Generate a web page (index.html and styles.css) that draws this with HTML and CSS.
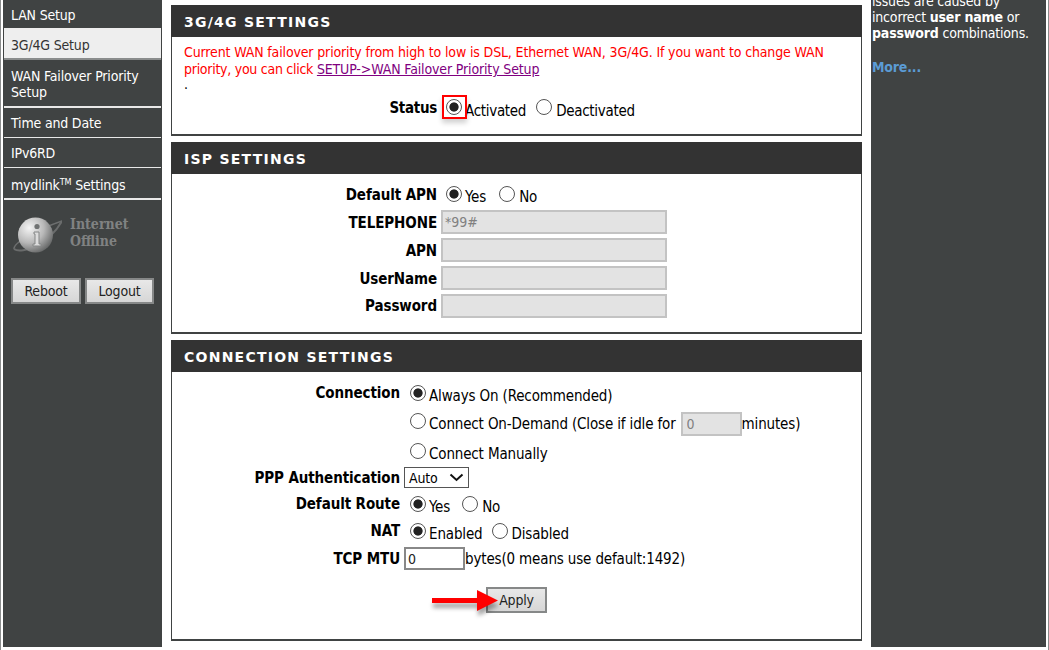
FILE: index.html
```html
<!DOCTYPE html>
<html lang="en">
<head>
<meta charset="utf-8">
<title>3G/4G Setup</title>
<link rel="stylesheet" href="styles.css">
</head>
<body>
<div class="page">
  <aside class="sidebar">
    <nav class="menu">
      <a class="item item-first">LAN Setup</a>
      <a class="item active">3G/4G Setup</a>
      <a class="item item-wan">WAN Failover Priority Setup</a>
      <a class="item">Time and Date</a>
      <a class="item">IPv6RD</a>
      <a class="item item-my">mydlink<sup>TM</sup> Settings</a>
    </nav>
    <div class="status">
      <svg class="info" width="50" height="44" viewBox="0 0 50 44">
        <defs>
          <radialGradient id="ball" cx="0.32" cy="0.3" r="0.85">
            <stop offset="0" stop-color="#f4f4f4"/>
            <stop offset="0.5" stop-color="#b8b8b8"/>
            <stop offset="1" stop-color="#505252"/>
          </radialGradient>
        </defs>
        <path d="M2 36 C1 30 24 17 50 8" fill="none" stroke="#6d6f6f" stroke-width="1.4"/>
        <path d="M2 36 C10 42 38 30 50 8" fill="none" stroke="#6a6c6c" stroke-width="2"/>
        <circle cx="23.5" cy="22" r="17.5" fill="url(#ball)"/>
        <circle cx="25" cy="13.5" r="2.6" fill="#707272"/>
        <path d="M22 19 h5 v12 h2 v2 h-8 v-2 h2 v-10 h-1z" fill="#dcdcdc" stroke="#858787" stroke-width="1"/>
      </svg>
      <div class="status-text">Internet<br>Offline</div>
    </div>
    <div class="side-buttons">
      <button class="side-btn btn-reboot" type="button">Reboot</button>
      <button class="side-btn btn-logout" type="button">Logout</button>
    </div>
  </aside>

  <main class="main">
    <section class="box box-one">
      <h2 class="box-title">3G/4G SETTINGS</h2>
      <div class="box-body">
        <p class="notice">Current WAN failover priority from high to low is DSL, Ethernet WAN, 3G/4G. If you want to change WAN <span class="notice-tail">priority, you can click </span><a class="notice-link">SETUP-&gt;WAN Failover Priority Setup</a></p>
        <p class="dot">.</p>
        <div class="status-row">
          <b class="status-label">Status</b>
          <span class="mark-wrap">
            <input class="radio" type="radio" name="st" checked>
            <span class="red-box"></span>
          </span>
          <span class="txt-low txt-first">Activated</span>
          <input class="radio radio-2" type="radio" name="st">
          <span class="txt-low">Deactivated</span>
        </div>
      </div>
    </section>

    <section class="box box-two">
      <h2 class="box-title">ISP SETTINGS</h2>
      <div class="box-body isp">
        <div class="row row-apn">
          <label class="lab">Default APN</label>
          <input class="radio first-radio" type="radio" name="apn" checked><span class="txt-low">Yes</span>
          <input class="radio radio-2" type="radio" name="apn"><span class="txt-low">No</span>
        </div>
        <div class="row row-f"><label class="lab">TELEPHONE</label><input class="field" type="text" value="*99#" disabled></div>
        <div class="row row-f"><label class="lab">APN</label><input class="field" type="text" disabled></div>
        <div class="row row-f"><label class="lab">UserName</label><input class="field" type="text" disabled></div>
        <div class="row row-f row-last"><label class="lab">Password</label><input class="field" type="text" disabled></div>
      </div>
    </section>

    <section class="box box-three">
      <h2 class="box-title">CONNECTION SETTINGS</h2>
      <div class="box-body conn">
        <div class="row r-c1"><label class="lab">Connection</label><input class="radio first-radio" type="radio" name="c" checked><span class="txt-low">Always On (Recommended)</span></div>
        <div class="row r-c2"><span class="lab"></span><input class="radio first-radio" type="radio" name="c"><span class="txt-low">Connect On-Demand (Close if idle for</span><input class="idle" type="text" value="0" disabled><span class="txt-low">minutes)</span></div>
        <div class="row r-c3"><span class="lab"></span><input class="radio first-radio" type="radio" name="c"><span class="txt-low">Connect Manually</span></div>
        <div class="row r-ppp"><label class="lab">PPP Authentication</label>
          <span class="select">Auto<svg class="chev" width="15" height="9" viewBox="0 0 15 9"><path d="M1.5 1.5 L7.5 7 L13.5 1.5" fill="none" stroke="#111" stroke-width="2"/></svg></span>
        </div>
        <div class="row r-route"><label class="lab">Default Route</label><input class="radio first-radio" type="radio" name="r" checked><span class="txt-low">Yes</span><input class="radio radio-2" type="radio" name="r"><span class="txt-low">No</span></div>
        <div class="row r-nat"><label class="lab">NAT</label><input class="radio first-radio" type="radio" name="n" checked><span class="txt-low">Enabled</span><input class="radio radio-2" type="radio" name="n"><span class="txt-low">Disabled</span></div>
        <div class="row r-mtu"><label class="lab">TCP MTU</label><input class="mtu" type="text" value="0"><span class="txt-mtu">bytes(0 means use default:1492)</span></div>
        <div class="apply-row">
          <span class="apply-wrap">
            <button class="apply" type="button">Apply</button>
            <svg class="arrow" width="72" height="30" viewBox="0 0 72 30">
              <path d="M2 11 H47 V3 L68 13.5 L47 24 V16 H2 Z" fill="#f00"/>
            </svg>
          </span>
        </div>
      </div>
    </section>
  </main>

  <aside class="help">
    <p class="help-text">issues are caused by incorrect <b>user name</b> or <b>password</b> combinations.</p>
    <p class="more">More...</p>
  </aside>
</div>
</body>
</html>
```
FILE: styles.css
```css
* { box-sizing: border-box; }
html, body { margin: 0; height: 100%; background: #fff; overflow: hidden; }
body { font-family: "DejaVu Sans Condensed", "DejaVu Sans", sans-serif; font-size: 14px; color: #000; letter-spacing: -0.18px; }
.page { display: flex; width: 1049px; height: 650px; padding: 0 0 3px 2px; border-left: 1px solid #8a8c8c; border-right: 1px solid #8a8c8c; align-items: stretch; }

.sidebar { width: 159px; background: #404343; color: #fff; border-left: 1px solid #404343; padding: 0 1px 0 0; flex: none; }
.menu { display: flex; flex-direction: column; }
.item { display: block; padding: 7px 0 0 7px; height: 30px; border-bottom: 1px solid #e8e8e8; line-height: 16px; }
.item-first { height: 28px; padding-top: 7px; border-bottom: 0; }
.active { height: 32px; background: #eeeeee; color: #333; border-bottom: 2px solid #8a8c8c; padding-top: 9px; }
.item-wan { height: 48px; padding-top: 8px; border-bottom: 2px solid #e8e8e8; }
.item-my { height: 32px; padding-top: 9px; border-bottom: 2px solid #e8e8e8; }
sup { font-size: 9px; line-height: 0; vertical-align: 5px; }
.status { display: flex; align-items: flex-start; padding: 13px 0 0 8px; height: 60px; }
.status-text { margin: 3px 0 0 8px; color: #808282; font-weight: bold; font-size: 14px; line-height: 17px; letter-spacing: 0; font-family: "DejaVu Serif Condensed", "DejaVu Serif", serif; }
.side-buttons { display: flex; gap: 4px; padding: 18px 0 0 7px; }
.side-btn { height: 26px; border: 2px solid #868888; background: linear-gradient(#e8e8e8, #d6d6d6); font: inherit; letter-spacing: inherit; color: #222; padding: 0; }
.btn-reboot { width: 70px; }
.btn-logout { width: 69px; }

.main { width: 691px; margin-left: 9px; flex: none; display: flex; flex-direction: column; gap: 6px; padding-top: 5px; }
.box { border: 1px solid #404343; border-top: 0; border-bottom-width: 2px; background: #fff; flex: none; }
.box-title { margin: 0; height: 32px; margin-inline: -1px; background: #333333; color: #fff; font-family: "DejaVu Sans", sans-serif; font-size: 14px; font-weight: bold; letter-spacing: 1.25px; line-height: 34px; padding-left: 13px; }
.box-one { height: 131px; }
.box-two { height: 192px; }
.box-three { height: 301px; }

.notice { margin: 0; padding: 7px 12px 0; color: #f00; line-height: 17px; letter-spacing: -0.14px; }
.notice-tail { letter-spacing: -0.27px; }
.notice-link { color: #800080; text-decoration: underline; }
.dot { margin: -2px 0 0; padding-left: 12px; line-height: 16px; height: 16px; }
.status-row { display: flex; align-items: center; padding-left: 216px; height: 30px; font-size: 15px; letter-spacing: -0.3px; }
.status-label { width: 49px; margin: 2px 9px 0 0; text-align: right; white-space: nowrap; }
.mark-wrap { position: relative; display: flex; width: 16px; height: 16px; }
.red-box { position: absolute; left: -4px; top: -4px; width: 25px; height: 24px; border: 2px solid #f00; box-shadow: 0 4px 5px rgba(0,0,0,.18); }
.txt-low { margin-top: 6px; line-height: 16px; white-space: nowrap; }
.status-row .txt-low { margin-top: 7px; }
.txt-first { margin-left: 3px; }

.radio { appearance: none; width: 16px; height: 16px; margin: 0; border: 1px solid #555; border-radius: 50%; background: #fff; flex: none; }
.radio:checked { background: radial-gradient(circle, #222 0 4.2px, #fff 5px); }
.radio-2 { margin: 0 4px 0 10px; }
.first-radio { margin: 0 3px 0 9px; }
.conn .first-radio { margin-left: 10px; }
.row-apn .radio-2 { margin-left: 13px; }
.r-route .radio-2 { margin-left: 12px; }
.r-nat .radio-2 { margin-left: 9px; }
.mark-wrap .radio { margin: 0; }

.row { display: flex; align-items: center; font-size: 15px; letter-spacing: -0.15px; }
.lab { display: block; flex: none; text-align: right; font-weight: bold; letter-spacing: -0.1px; white-space: nowrap; }
.isp .lab { width: 265px; margin-top: 2px; }
.isp .row-last .lab { margin-top: 0; }
.conn .lab { width: 228px; }
.row-apn { height: 34px; padding-top: 6px; }
.row-f { height: 28px; }
.row-last { height: 27px; }
.isp .row-f .lab { margin-right: 4px; }
.field { width: 226px; height: 24px; border: 2px solid #c3c3c3; background: #e3e3e3; color: #808080; font: 14px "DejaVu Sans Condensed", "DejaVu Sans", sans-serif; padding: 0 2px; }

.conn { padding-top: 7px; }
.r-c1 { height: 28px; }
.r-c2 { height: 28px; }
.r-c3 { height: 32px; }
.r-ppp { height: 21px; }
.r-route { height: 32px; }
.r-nat { height: 22px; }
.r-mtu { height: 23px; margin-top: 5px; }
.idle { width: 61px; height: 24px; margin: 5px 0 0 5px; border: 2px solid #c3c3c3; background: #e3e3e3; color: #808080; font: 14px "DejaVu Sans Condensed", "DejaVu Sans", sans-serif; padding: 0 4px; flex: none; }
.select { display: flex; align-items: center; justify-content: space-between; width: 65px; height: 21px; margin-left: 4px; border: 1px solid #555; padding: 0 4px; background: #fff; font-size: 14px; }
.mtu { width: 61px; height: 23px; margin-left: 4px; border: 2px solid #888; font: 14px "DejaVu Sans Condensed", "DejaVu Sans", sans-serif; padding: 0 2px; color: #222; flex: none; }
.txt-mtu { white-space: nowrap; }
.apply-row { padding: 17px 0 0 314px; }
.apply-wrap { position: relative; display: inline-block; }
.apply { display: block; width: 61px; height: 26px; border: 2px solid #868888; background: linear-gradient(#e8e8e8, #d6d6d6); font: inherit; letter-spacing: inherit; color: #222; padding: 0; }
.arrow { position: absolute; left: -56px; top: 0; filter: drop-shadow(1px 5px 2px rgba(0,0,0,.35)); }

.help { width: 175px; margin-left: 9px; flex: none; background: #404343; color: #fff; padding-left: 1px; overflow: hidden; }
.help-text { margin: -7px 0 0; line-height: 16px; }
.more { margin: 18px 0 0; color: #5b9bd5; font-weight: bold; }
```
